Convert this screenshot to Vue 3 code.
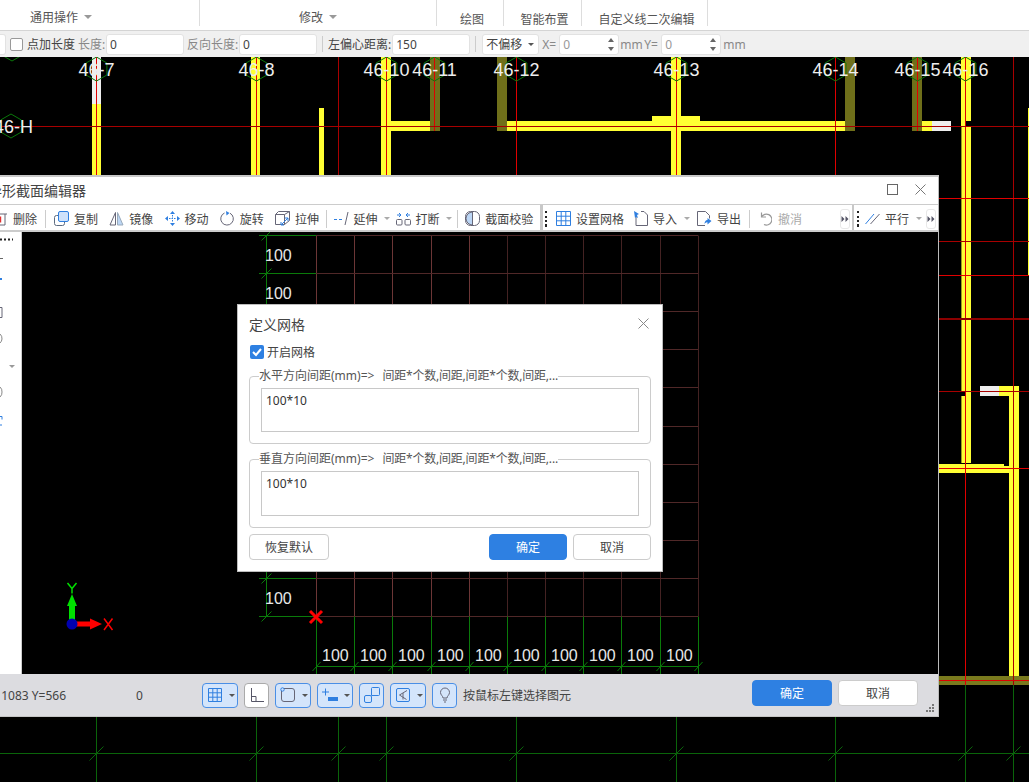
<template>
  <div class="page">
    <div class="ribbon">
      <div class="rib-cell first">通用操作<i class="caret"></i></div>
      <div class="rib-cell second">修改<i class="caret"></i></div>
      <div class="rib-cell third low">绘图</div>
      <div class="rib-cell fourth low">智能布置</div>
      <div class="rib-cell fifth low">自定义线二次编辑</div>
    </div>

    <div class="options">
      <span class="opt-stub"></span>
      <span class="opt-check"></span>
      <span class="opt-label dark l1">点加长度</span>
      <span class="opt-label l2">长度:</span>
      <input class="opt-input" value="0" readonly />
      <span class="opt-label l3">反向长度:</span>
      <input class="opt-input" value="0" readonly />
      <span class="opt-sep"></span>
      <span class="opt-label dark l7">左偏心距离:</span>
      <input class="opt-input" value="150" readonly />
      <span class="opt-sep"></span>
      <span class="opt-select">不偏移<i class="caret dark"></i></span>
      <span class="opt-label l4">X=</span>
      <span class="spin"><span>0</span><i class="up"></i><i class="down"></i></span>
      <span class="opt-label l5">mm</span>
      <span class="opt-label l6">Y=</span>
      <span class="spin"><span>0</span><i class="up"></i><i class="down"></i></span>
      <span class="opt-label l8">mm</span>
    </div>

    <div class="cad">
      <svg class="cad-svg" viewBox="0 57 1029 725" width="1029" height="725">
        <rect v-for="(w, i) in walls" :key="'w' + i" :x="w[0]" :y="w[1]" :width="w[2]" :height="w[3]" :fill="w[4]" />
        <line v-for="(l, i) in redLines" :key="'r' + i" :x1="l[0]" :y1="l[1]" :x2="l[2]" :y2="l[3]" :stroke="l[4]" :stroke-width="l[5] || 1" />
        <g stroke="#0a640a" fill="none">
          <line x1="0" y1="753.5" x2="1029" y2="753.5" />
          <template v-for="x in greenXs" :key="'g' + x">
            <line :x1="x" y1="685" :x2="x" y2="782" />
            <line :x1="x - 7" y1="760.5" :x2="x + 7" y2="746.5" />
          </template>
        </g>
        <polygon v-for="h in hexes" :key="'h' + h.x" :points="h.points" fill="none" stroke="#0a780a" />
        <text v-for="a in axisLabels" :key="a.t" class="axis-label" :x="a.x" y="75.5" text-anchor="middle">{{ a.t }}</text>
        <text class="axis-label" x="33" y="133" text-anchor="end">46-H</text>
      </svg>
    </div>

    <div class="win">
      <div class="win-title">
        <span class="win-name">异形截面编辑器</span>
        <svg class="win-btn" width="11" height="11" viewBox="0 0 11 11"><rect x="0.5" y="0.5" width="10" height="10" fill="none" stroke="#666" /></svg>
        <svg class="win-btn close" width="11" height="11" viewBox="0 0 11 11"><path d="M0.5 0.5l10 10M10.5 0.5l-10 10" stroke="#777" fill="none" /></svg>
      </div>

      <div class="win-tools">
        <div class="tgroup g1">
          <span class="tool cut">
            <svg width="15" height="15" viewBox="0 0 15 15"><path d="M1 3h13M3 3v11h9V3" fill="none" stroke="#667" /><path d="M7.5 5.5v6" stroke="#e03030" stroke-width="1.4" /></svg>删除
          </span>
          <span class="tsep"></span>
          <span class="tool">
            <svg width="15" height="15" viewBox="0 0 15 15"><rect x="0.5" y="4.5" width="10" height="10" rx="2" fill="#fff" stroke="#5c6b80" /><rect x="4.5" y="0.5" width="10" height="10" rx="1.5" fill="#cfe2fb" stroke="#2f7fe0" /></svg>复制
          </span>
          <span class="tool">
            <svg width="15" height="15" viewBox="0 0 15 15"><path d="M6.5 1.5L1 14h5.5z" fill="none" stroke="#667" /><path d="M8.5 1.5L14 14H8.5z" fill="#bcd6f5" stroke="#9ab" /></svg>镜像
          </span>
          <span class="tool">
            <svg width="15" height="15" viewBox="0 0 15 15"><path d="M7.5 0L5 3h5zM7.5 15L5 12h5zM0 7.5L3 5v5zM15 7.5L12 5v5z" fill="#2f7fe0" /><path d="M7.5 4v7M4 7.5h7" stroke="#2f7fe0" stroke-dasharray="1.5 1" /></svg>移动
          </span>
          <span class="tool">
            <svg width="15" height="15" viewBox="0 0 15 15"><path d="M10 2.2A6.3 6.3 0 1 1 4.5 2" fill="none" stroke="#667" /><path d="M6 0l3.5 2L6.5 4.5z" fill="#2f7fe0" /></svg>旋转
          </span>
          <span class="tool">
            <svg width="15" height="15" viewBox="0 0 15 15"><path d="M0.5 3.5h9v10h-9zM0.5 3.5l3-3h11v9l-5 4M9.5 3.5l5-3" fill="none" stroke="#667" /><path d="M6 14l7-7M6 11v3h3M13 10V7h-3" fill="none" stroke="#2f7fe0" /></svg>拉伸
          </span>
          <span class="tsep t2"></span>
          <span class="tool">
            <svg width="15" height="15" viewBox="0 0 15 15"><path d="M0 8.5h3M5 8.5h3" stroke="#2f7fe0" /><path d="M14 1l-3 13" stroke="#667" /></svg>延伸<i class="caret small"></i>
          </span>
          <span class="tool tight">
            <svg width="15" height="15" viewBox="0 0 15 15"><rect x="0.5" y="8.5" width="5.5" height="5.5" rx="1" fill="none" stroke="#667" /><rect x="9" y="8.5" width="5.5" height="5.5" rx="1" fill="none" stroke="#667" /><path d="M1 4h3M3 2l2 2-2 2M14 4h-3M12 2l-2 2 2 2" fill="none" stroke="#2f7fe0" /></svg>打断<i class="caret small"></i>
          </span>
          <span class="tsep t3"></span>
          <span class="tool last">
            <svg width="15" height="15" viewBox="0 0 15 15"><rect x="0.5" y="0.5" width="14" height="14" rx="5" fill="#fff" stroke="#667" /><path d="M7.5 1a6.5 6.5 0 0 0 0 13z" fill="#bcd6f5" stroke="#667" /></svg>截面校验
          </span>
        </div>

        <div class="tgroup g2">
          <span class="grip"></span>
          <span class="tool">
            <svg width="15" height="15" viewBox="0 0 15 15"><path d="M0.5 0.5h14v14h-14zM5.2 0.5v14M9.8 0.5v14M0.5 5.2h14M0.5 9.8h14" fill="none" stroke="#2f7fe0" /></svg>设置网格
          </span>
          <span class="tool">
            <svg width="15" height="15" viewBox="0 0 15 15"><path d="M3 6v8.5h11.5V4L11 0.5H8" fill="none" stroke="#667" /><path d="M1 0l5 3-2 1 1 3-2-1-1 1z" fill="#2f7fe0" /></svg>导入<i class="caret small"></i>
          </span>
          <span class="tool tight2">
            <svg width="15" height="15" viewBox="0 0 15 15"><path d="M8 14.5H0.5V0.5h8l4 4v3" fill="none" stroke="#667" /><path d="M14.5 10l-4-3v2c-2 0-3 2-3 4 1-1 2-2 3-1.5V13.5z" fill="#2f7fe0" /></svg>导出
          </span>
          <span class="tsep t4"></span>
          <span class="tool undo">
            <svg width="12" height="15" viewBox="0 0 12 15"><path d="M1.5 1.5V6H6M1.5 6A5.5 5.5 0 1 1 4 13.5" fill="none" stroke="#999" stroke-width="1.2" /></svg>撤消
          </span>
          <span class="more"><svg width="8" height="8" viewBox="0 0 8 8"><path d="M0.5 1l3 3-3 3zM4.5 1l3 3-3 3z" fill="#556" /></svg></span>
        </div>

        <div class="tgroup g3">
          <span class="grip"></span>
          <span class="tool">
            <svg width="15" height="15" viewBox="0 0 15 15"><path d="M0.5 13L9 3" stroke="#2f7fe0" /><path d="M5.5 13L14.5 3" stroke="#667" /></svg>平行<i class="caret small"></i>
          </span>
          <span class="more"><svg width="8" height="8" viewBox="0 0 8 8"><path d="M0.5 1l3 3-3 3zM4.5 1l3 3-3 3z" fill="#556" /></svg></span>
        </div>
      </div>

      <div class="win-body">
        <div class="side">
          <svg width="21" height="441" viewBox="0 0 21 441">
            <path d="M0 7.5h13" stroke="#222" stroke-width="2" stroke-dasharray="2 2" />
            <path d="M0 26.5h3" stroke="#666" />
            <path d="M0 47h2" stroke="#2f7fe0" stroke-width="2" />
            <path d="M0 75.5h2v10H0" stroke="#667" fill="none" />
            <path d="M0 102a6 6 0 0 1 2 5 6 6 0 0 1-2 4" stroke="#888" fill="none" />
            <path d="M9 133h6l-3 3z" fill="#999" />
            <path d="M0 155a6 6 0 0 1 2 5 6 6 0 0 1-2 5" stroke="#888" fill="none" />
            <path d="M0 184.5h2v3M0 193h2" stroke="#2f7fe0" fill="none" />
          </svg>
        </div>
        <div class="stage">
          <svg viewBox="22 232 917 442" width="917" height="442">
            <line v-for="(x, i) in gridXs" :key="'vx' + i" :x1="x" y1="235.5" :x2="x" y2="616.5" :stroke="i < 5 ? '#6c3636' : '#442222'" />
            <line v-for="y in gridYs" :key="'hy' + y" x1="316" :y1="y" x2="698" :y2="y" stroke="#502828" />
            <g stroke="#0a7a0a">
              <line x1="266.5" y1="235.5" x2="266.5" y2="616.5" />
              <line x1="316" y1="666.5" x2="698" y2="666.5" />
              <template v-for="y in gridYs" :key="'dy' + y">
                <line x1="259" :y1="y" x2="316" :y2="y" />
                <line x1="261.5" :y1="y + 5" x2="271.5" :y2="y - 5" />
              </template>
              <template v-for="x in gridXs" :key="'dx' + x">
                <line :x1="x" y1="616.5" :x2="x" y2="674" />
                <line :x1="x - 4" y1="671" :x2="x + 4" y2="662" />
              </template>
            </g>
            <text v-for="y in visibleYs" :key="'ty' + y" class="dim-label" x="265" :y="y + 25">100</text>
            <text v-for="x in gridXs.slice(0, 10)" :key="'tx' + x" class="dim-label" :x="x + 5.5" y="661">100</text>
            <path d="M310 611l12 12M322 611l-12 12" stroke="#ff0000" stroke-width="3" />
            <rect x="69" y="605" width="6" height="15" fill="#00e000" />
            <path d="M67 606l5-12 5 12z" fill="#00e000" />
            <rect x="76" y="621.5" width="14" height="5" fill="#ff0000" />
            <path d="M90 618.5l12 5.5-12 5.5z" fill="#ff0000" />
            <circle cx="72" cy="624" r="5.5" fill="#0000b0" />
            <path d="M67.5 583l4.5 5.5v5M76.5 583l-4.5 5.5" stroke="#00e000" stroke-width="1.5" fill="none" />
            <path d="M104 618.5l8.5 11.5M112.5 618.5L104 630" stroke="#ff0000" stroke-width="1.5" fill="none" />
          </svg>
        </div>
      </div>

      <div class="win-status">
        <span class="coord">1083 Y=566</span>
        <span class="zero">0</span>
        <span class="sbtn wide">
          <svg width="16" height="16" viewBox="0 0 16 16"><path d="M1.5 1.5h13v13h-13zM5.8 1.5v13M10.2 1.5v13M1.5 5.8h13M1.5 10.2h13" fill="none" stroke="#2f7fe0" /></svg><i class="caret dark"></i>
        </span>
        <span class="sbtn off">
          <svg width="16" height="16" viewBox="0 0 16 16"><path d="M2.5 1v13.5H15M2.5 9.5H7v5" fill="none" stroke="#556" /></svg>
        </span>
        <span class="sbtn wide">
          <svg width="16" height="16" viewBox="0 0 16 16"><rect x="1.5" y="1.5" width="13" height="13" rx="2.5" fill="none" stroke="#667" /><circle cx="2.5" cy="2.5" r="1.7" fill="#d4e5fb" stroke="#2f7fe0" /></svg><i class="caret dark"></i>
        </span>
        <span class="sbtn wide">
          <svg width="16" height="16" viewBox="0 0 16 16"><path d="M0 5h7M3.5 1.5v7" stroke="#2f7fe0" fill="none" /><rect x="6" y="10" width="10" height="4" fill="#2f7fe0" /></svg><i class="caret dark"></i>
        </span>
        <span class="sbtn">
          <svg width="16" height="16" viewBox="0 0 16 16"><rect x="0.5" y="8.5" width="7" height="7" rx="1.5" fill="none" stroke="#2f7fe0" /><path d="M7.5 8.5h7a1 1 0 0 0 1-1v-6a1 1 0 0 0-1-1h-6a1 1 0 0 0-1 1z" fill="none" stroke="#2f7fe0" /></svg>
        </span>
        <span class="sbtn wide">
          <svg width="16" height="16" viewBox="0 0 16 16"><rect x="1.5" y="1.5" width="13" height="13" rx="1.5" fill="none" stroke="#2f7fe0" /><path d="M12 3.5L4.5 8l7 4.5M8 6v6.5" fill="none" stroke="#667" /></svg><i class="caret dark"></i>
        </span>
        <span class="sbtn">
          <svg width="16" height="16" viewBox="0 0 16 16"><path d="M6 11c0-2-2.5-3-2.5-5.5a4.5 4.5 0 0 1 9 0C12.5 8 10 9 10 11zM6 13h4M7 15h2" fill="none" stroke="#667" /></svg>
        </span>
        <span class="hint">按鼠标左键选择图元</span>
        <span class="status-actions">
          <button class="btn primary">确定</button>
          <button class="btn">取消</button>
        </span>
        <svg class="resize" width="9" height="9" viewBox="0 0 9 9"><path d="M6 0h2v2H6zM3 3h2v2H3zM6 3h2v2H6zM0 6h2v2H0zM3 6h2v2H3zM6 6h2v2H6z" fill="#777" /></svg>
      </div>
    </div>

    <div class="dialog">
      <div class="dlg-head">
        <span>定义网格</span>
        <svg width="11" height="11" viewBox="0 0 11 11"><path d="M0.5 0.5l10 10M10.5 0.5l-10 10" stroke="#888" fill="none" /></svg>
      </div>
      <div class="dlg-check">
        <svg width="14" height="14" viewBox="0 0 14 14"><rect width="14" height="14" rx="2" fill="#2e80e2" /><path d="M3 7l3 3 5-6" stroke="#fff" stroke-width="2" fill="none" /></svg>
        <span>开启网格</span>
      </div>
      <fieldset class="dlg-group">
        <legend>水平方向间距(mm)=&gt;<span class="lg-tail">间距*个数,间距,间距*个数,间距,...</span></legend>
        <textarea class="h1" readonly v-model="spacingH"></textarea>
      </fieldset>
      <fieldset class="dlg-group">
        <legend>垂直方向间距(mm)=&gt;<span class="lg-tail">间距*个数,间距,间距*个数,间距,...</span></legend>
        <textarea class="h2" readonly v-model="spacingV"></textarea>
      </fieldset>
      <div class="dlg-actions">
        <button class="btn reset">恢复默认</button>
        <button class="btn primary">确定</button>
        <button class="btn">取消</button>
      </div>
    </div>
  </div>
</template>

<script setup>
import { ref } from 'vue'

const spacingH = ref('100*10')
const spacingV = ref('100*10')

const Y = '#ffff33'
const O = '#6f6f1a'
const W = '#eeeeee'
const E = '#9a9a20'
const R = '#e00000'
const D = '#a80000'

const walls = [
  [92, 57, 9, 47, W], [92, 104, 9, 72, Y],
  [251, 57, 9, 119, Y],
  [319, 108, 5, 68, Y],
  [381, 57, 10, 119, Y], [391, 121, 40, 10, Y],
  [430, 57, 10, 74, O], [497, 57, 10, 74, O],
  [507, 121, 338, 10, Y], [652, 116, 48, 5, Y], [671, 57, 10, 119, Y],
  [845, 57, 10, 74, O], [912, 57, 10, 74, O],
  [922, 121, 10, 10, Y], [932, 121, 19, 10, W],
  [961, 57, 10, 64, Y], [961, 121, 5, 5, Y], [961, 126, 10, 265, Y],
  [966, 391, 5, 5, Y], [961, 396, 10, 67, Y],
  [961, 126, 1, 265, E], [961, 396, 1, 67, E],
  [939, 464, 65, 9, Y], [1004, 466, 15, 7, Y],
  [980, 386, 19, 10, W], [999, 386, 20, 10, Y], [1009, 396, 10, 280, Y],
  [939, 676, 90, 9, '#7a7a1e'],
  [1028, 108, 1, 167, Y],
]

const vReds = [
  [96.5, R, 685], [256.5, R, 685], [338.5, D, 685], [386.5, R, 685], [434.5, R, 131], [516.5, R, 685],
  [676.5, R, 685], [835.5, R, 685], [917.5, R, 131], [965.5, R, 685], [1013.5, D, 685],
]
const redLines = [
  ...vReds.map(([x, c, end]) => [x, 57, x, end, c]),
  [0, 126.5, 1029, 126.5, D],
  [939, 198.5, 1029, 198.5, R],
  [939, 241.5, 1029, 241.5, D],
  [939, 275.5, 1029, 275.5, R],
  [939, 319, 1029, 319, '#8c0000', 2],
  [939, 391.5, 1029, 391.5, D],
  [939, 468.5, 1029, 468.5, R],
  [939, 680.5, 1029, 680.5, R],
]

const greenXs = [96.5, 256.5, 338.5, 386.5, 516.5, 676.5, 835.5, 965.5, 1013.5]

const axisLabels = [
  { t: '46-7', x: 96.5 }, { t: '46-8', x: 256.5 }, { t: '46-10', x: 386.5 }, { t: '46-11', x: 434.5 },
  { t: '46-12', x: 516.5 }, { t: '46-13', x: 676.5 }, { t: '46-14', x: 835.5 }, { t: '46-15', x: 917.5 }, { t: '46-16', x: 965.5 },
]

function hexPoints(cx, cy, r) {
  const pts = []
  for (let i = 0; i < 6; i++) {
    const a = Math.PI / 6 + (i * Math.PI) / 3
    pts.push((cx + r * Math.cos(a)).toFixed(1) + ',' + (cy + r * Math.sin(a)).toFixed(1))
  }
  return pts.join(' ')
}
const hexes = [
  ...axisLabels.map((a) => ({ x: a.x, points: hexPoints(a.x, 69, 12) })),
  { x: 11, points: hexPoints(11, 126, 12) },
  { x: 12, points: hexPoints(12, 49, 12) },
]

const gridXs = Array.from({ length: 11 }, (_, i) => Math.round(316 + i * 38.17) + 0.5)
const gridYs = Array.from({ length: 11 }, (_, i) => Math.round(235 + i * 38.1) + 0.5)
// the dialog covers the rows in between
const visibleYs = [gridYs[0], gridYs[1], gridYs[9]]
</script>

<style scoped>
.page {
  position: relative;
  width: 1029px;
  height: 782px;
  overflow: hidden;
  display: flex;
  flex-direction: column;
  background: #000;
  color: #444;
  font-family: "Noto Sans", "Noto Sans CJK SC", sans-serif;
  font-size: 12px;
}

/* top ribbon */
.ribbon {
  display: flex;
  height: 30px;
  flex: none;
  box-sizing: border-box;
  background: #fff;
  padding-bottom: 4px;
}
.rib-cell {
  display: flex;
  align-items: center;
  justify-content: center;
  box-sizing: border-box;
  border-right: 1px solid #ddd;
  padding-top: 8px;
  color: #555;
}
.rib-cell.low { padding-top: 11px; }
.first { width: 200px; justify-content: flex-start; padding-left: 30px; }
.second { width: 237px; }
.third { width: 67px; padding-left: 4px; }
.fourth { width: 78px; padding-left: 4px; }
.fifth { width: 126px; padding-left: 4px; }

.caret {
  display: inline-block;
  width: 0;
  height: 0;
  margin-left: 6px;
  border-left: 4px solid transparent;
  border-right: 4px solid transparent;
  border-top: 4px solid #999;
}
.caret.small {
  margin-left: 1.5px;
  border-left-width: 3px;
  border-right-width: 3px;
  border-top-width: 3px;
  border-top-color: #aaa;
}
.caret.dark {
  border-left-width: 3px;
  border-right-width: 3px;
  border-top-width: 3px;
  border-top-color: #555;
}

/* options row */
.options {
  display: flex;
  align-items: center;
  flex: none;
  height: 27px;
  box-sizing: border-box;
  background: #f0f0f0;
  border-top: 1px solid #d4d4d4;
}
.opt-stub {
  width: 6px;
  height: 21px;
  box-sizing: border-box;
  background: #fff;
  border: 1px solid #e2e2e2;
  border-left: 0;
  border-radius: 0 3px 3px 0;
}
.opt-check {
  width: 13px;
  height: 13px;
  margin: 0 4px 0 4px;
  box-sizing: border-box;
  background: #fff;
  border: 1px solid #999;
  border-radius: 2px;
}
.opt-label { color: #888; white-space: nowrap; }
.opt-label.dark { color: #444; }
.l1 { width: 48px; }
.l2 { width: 28px; margin-left: 3px; }
.l3 { width: 52px; margin-left: 3px; }
.l4 { width: 17px; margin-left: 3px; }
.l5 { width: 23px; margin-left: 1px; }
.l6 { width: 17px; margin-left: 1px; }
.l7 { margin-right: 1px; }
.l8 { margin-left: 2px; }
.opt-input {
  width: 78px;
  height: 21px;
  box-sizing: border-box;
  padding: 0 3px;
  background: #fff;
  border: 1px solid #e2e2e2;
  border-radius: 3px;
  outline: none;
  color: #444;
  font: inherit;
}
.opt-sep {
  width: 1px;
  height: 16px;
  margin: 0 5px;
  background: #ccc;
}
.opt-select {
  display: flex;
  align-items: center;
  justify-content: space-between;
  width: 57px;
  height: 21px;
  margin-left: 1px;
  box-sizing: border-box;
  padding: 0 4px 0 3px;
  background: #fff;
  border: 1px solid #e2e2e2;
  border-radius: 3px;
}
.spin {
  position: relative;
  width: 60px;
  height: 21px;
  box-sizing: border-box;
  padding: 0 3px;
  line-height: 19px;
  background: #fff;
  border: 1px solid #e2e2e2;
  border-radius: 3px;
  color: #999;
}
.spin i {
  position: absolute;
  right: 4px;
  width: 0;
  height: 0;
  border-left: 3px solid transparent;
  border-right: 3px solid transparent;
}
.spin .up { top: 3px; border-bottom: 4px solid #666; }
.spin .down { bottom: 3px; border-top: 4px solid #666; }

.cad { flex: 1; position: relative; }
.cad-svg { position: absolute; left: 0; top: 0; display: block; }
.axis-label {
  fill: #eeeeee;
  font-family: "Liberation Sans", Arial, sans-serif;
  font-size: 18px;
}

/* editor window */
.win {
  position: absolute;
  left: 0;
  top: 175px;
  width: 939px;
  height: 542px;
  box-sizing: border-box;
  display: flex;
  flex-direction: column;
  background: #fff;
  border-top: 2px solid #c8c8c8;
  border-right: 1px solid #bbb;
}
.win-title {
  display: flex;
  align-items: center;
  flex: none;
  height: 28px;
  box-sizing: border-box;
  padding-bottom: 2px;
  border-bottom: 1px solid #ccc;
}
.win-name {
  margin-left: -12px;
  margin-right: auto;
  font-size: 14px;
  color: #444;
}
.win-btn { margin-right: 17px; }
.win-btn.close { margin-right: 12px; }

.win-tools {
  display: flex;
  flex: none;
  height: 27px;
  box-sizing: border-box;
  padding-top: 2px;
  border-bottom: 2px solid #ccc;
}
.tgroup {
  display: flex;
  align-items: center;
  box-sizing: border-box;
  height: 100%;
}
.g1 { width: 540px; }
.g2 { width: 312px; border-left: 3px solid #c8c8c8; margin-top: -2px; height: calc(100% + 2px); padding-top: 2px; }
.g3 { flex: 1; border-left: 2px solid #c8c8c8; margin-top: -2px; height: calc(100% + 2px); padding-top: 2px; }
.tool {
  display: flex;
  align-items: center;
  gap: 5px;
  flex: none;
  white-space: nowrap;
  color: #444;
}
.tool svg { flex: none; }
.tool + .tool { margin-left: 11.25px; }
.tool.cut { margin-left: -7px; }
.tool.tight { margin-left: 5.5px; }
.g2 .tool + .tool { margin-left: 9px; }
.g2 .tool.tight2 { margin-left: 7.5px; }
.tool.undo { color: #aaa; gap: 6px; }
.tsep {
  flex: none;
  width: 1px;
  height: 18px;
  margin: 0 8px;
  background: #ccc;
}
.tsep.t2 { margin: 0 6.5px 0 7px; }
.tsep.t3 { margin: 0 7.5px 0 4.5px; }
.tsep.t4 { margin: 0 10px 0 8px; }
.grip {
  flex: none;
  width: 2px;
  height: 16px;
  margin: 0 9px 0 2px;
  background: repeating-linear-gradient(#222 0 2px, transparent 2px 4.5px);
}
.g3 .grip { margin: 0 6px 0 3px; }
.more {
  display: flex;
  align-items: center;
  justify-content: center;
  flex: none;
  width: 10px;
  height: 20px;
  margin-left: auto;
  margin-right: 2px;
  box-sizing: border-box;
  border: 1px solid #e8e8e8;
  border-radius: 3px;
}
.more svg { flex: none; }

.win-body { flex: 1; display: flex; min-height: 0; }
.side {
  flex: none;
  width: 22px;
  box-sizing: border-box;
  background: #fff;
  border-right: 1px solid #ccc;
}
.side svg { display: block; }
.stage { flex: 1; background: #000; overflow: hidden; }
.stage svg { display: block; }
.dim-label {
  fill: #e8e8e8;
  font-family: "Liberation Sans", Arial, sans-serif;
  font-size: 16px;
}

.win-status {
  position: relative;
  display: flex;
  align-items: center;
  flex: none;
  height: 43px;
  box-sizing: border-box;
  padding-right: 20px;
  background: #dcdce0;
  border-bottom: 1px solid #c4c4c4;
  color: #444;
}
.coord {
  flex: none;
  width: 66px;
  display: flex;
  justify-content: flex-end;
  white-space: pre;
}
.zero { flex: none; width: 136px; padding-left: 70px; box-sizing: border-box; }
.sbtn {
  display: flex;
  align-items: center;
  flex: none;
  width: 25px;
  height: 25px;
  margin-right: 6px;
  box-sizing: border-box;
  padding-left: 3.5px;
  background: #d4e5fb;
  border: 1px solid #4a8fe6;
  border-radius: 4px;
}
.sbtn.wide { width: 36px; }
.sbtn.off { background: #fff; border-color: #aaa; }
.sbtn .caret { margin-left: 6px; }
.hint { color: #444; }
.status-actions {
  display: flex;
  gap: 6px;
  margin-left: auto;
  align-self: flex-start;
  margin-top: 6px;
}
.status-actions .btn { width: 80px; }
.resize { position: absolute; right: 3px; bottom: 3px; }

.btn {
  height: 26px;
  box-sizing: border-box;
  padding: 0;
  background: #fff;
  border: 1px solid #ccc;
  border-radius: 4px;
  color: #444;
  font: inherit;
}
.btn.primary {
  background: #2e80e2;
  border-color: #2e80e2;
  color: #fff;
}

/* grid dialog */
.dialog {
  position: absolute;
  left: 237px;
  top: 304px;
  width: 426px;
  height: 268px;
  box-sizing: border-box;
  padding: 0 11px;
  background: #fff;
  border: 1px solid #bdbdbd;
}
.dlg-head {
  display: flex;
  align-items: center;
  justify-content: space-between;
  box-sizing: border-box;
  height: 38px;
  padding: 0 2px 1px 0;
  font-size: 14px;
  color: #444;
}
.dlg-check {
  display: flex;
  align-items: center;
  gap: 3px;
  height: 18px;
  padding-left: 1px;
}
.dlg-group {
  margin: 7px 0 0;
  padding: 0 11px 11px;
  border: 1px solid #ccc;
  border-radius: 4px;
}
.dlg-group legend {
  margin-left: -2px;
  padding: 0;
  line-height: 16px;
  white-space: nowrap;
  color: #555;
}
.lg-tail {
  margin-left: 8px;
  letter-spacing: -0.2px;
}
.dlg-group textarea {
  display: block;
  width: 100%;
  margin-top: 4px;
  box-sizing: border-box;
  padding: 4px;
  resize: none;
  border: 1px solid #c8c8c8;
  outline: none;
  color: #333;
  font: inherit;
  line-height: 16px;
}
.dlg-group textarea.h1 { height: 44px; }
.dlg-group textarea.h2 { height: 45px; }
.dlg-actions {
  display: flex;
  gap: 6px;
  margin-top: 6px;
}
.dlg-actions .btn { width: 78px; }
.dlg-actions .reset { width: 80px; margin-right: auto; }
</style>

<style>
html, body { background: #000; }
</style>
